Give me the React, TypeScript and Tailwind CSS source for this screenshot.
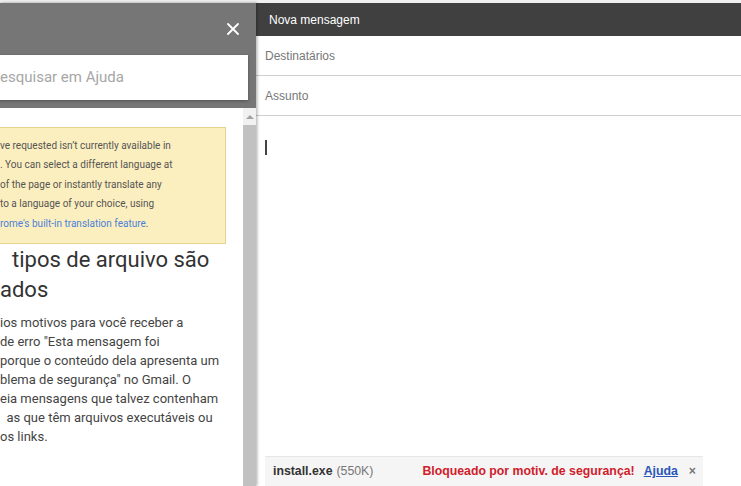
import { X } from 'lucide-react';

const NOTICE = [
  've requested isn’t currently available in',
  '. You can select a different language at',
  'of the page or instantly translate any',
  'to a language of your choice, using',
];

const BODY = [
  'ios motivos para você receber a',
  'de erro "Esta mensagem foi',
  'porque o conteúdo dela apresenta um',
  'blema de segurança" no Gmail. O',
  'eia mensagens que talvez contenham',
  '  as que têm arquivos executáveis ou',
  'os links.',
];

const HelpPanel = () => (
  <div className="relative z-10 flex w-[256px] shrink-0 flex-col bg-white font-['Roboto',sans-serif] shadow-[1px_0_3px_rgba(0,0,0,0.35)]">
    <div className="flex shrink-0 flex-col bg-[#767676] pb-[8px]">
      <div className="flex h-[52px] items-center justify-end pr-[13px]">
        <X className="h-[20px] w-[20px] text-white" strokeWidth={2.2} />
      </div>
      <div className="-ml-[10px] mr-[8px] flex h-[45px] items-center bg-white pl-[10px] shadow-[0_1px_3px_rgba(0,0,0,0.3)]">
        <span className="whitespace-nowrap text-[15px] text-[#a6a6a6]">esquisar em Ajuda</span>
      </div>
    </div>

    <div className="flex min-h-0 flex-1">
      <div className="flex min-w-0 flex-1 flex-col overflow-hidden">
        <div className="-ml-[10px] mr-[17px] mt-[19px] h-[117px] shrink-0 border border-[#e6d48e] bg-[#fcefbf] pl-[9px] pt-[8px] text-[10px] leading-[19.4px] text-[#555]">
          {NOTICE.map((line) => (
            <div key={line} className="whitespace-nowrap">{line}</div>
          ))}
          <div className="whitespace-nowrap text-[#4a7fd9]">rome's built-in translation feature<span className="text-[#555]">.</span></div>
        </div>

        <h1 className="mt-[1px] shrink-0 whitespace-nowrap text-[22px] leading-[30px] text-[#333]">
          <div className="pl-[12px]">tipos de arquivo são</div>
          <div>ados</div>
        </h1>

        <div className="mt-[8px] shrink-0 text-[13px] leading-[19px] text-[#444]">
          {BODY.map((line) => (
            <div key={line} className="whitespace-pre">{line}</div>
          ))}
        </div>

        <h2 className="mt-[36px] shrink-0 whitespace-nowrap pl-[36px] text-[22px] leading-[30px] text-[#333]">você não</h2>
      </div>

      <div className="flex w-[13px] shrink-0 flex-col bg-[#f1f1f1]">
        <div className="flex h-[17px] items-center justify-center">
          <div className="h-0 w-0 border-x-[4px] border-b-[4px] border-x-transparent border-b-[#a3a3a3]" />
        </div>
        <div className="flex-1 bg-[#c1c1c1]" />
      </div>
    </div>
  </div>
);

const Compose = () => (
  <div className="flex min-w-0 flex-1 flex-col bg-white font-['Liberation_Sans',Arial,sans-serif]">
    <div className="flex h-[33px] shrink-0 items-center bg-[#404040] pl-[13px] text-[12px] text-white">Nova mensagem</div>
    <div className="flex h-[40px] shrink-0 items-center border-b border-[#cfcfcf] pl-[9px] text-[12px] text-[#777]">Destinatários</div>
    <div className="flex h-[40px] shrink-0 items-center border-b border-[#cfcfcf] pl-[9px] text-[12px] text-[#777]">Assunto</div>

    <div className="flex flex-1 flex-col pl-[9px] pt-[24px]">
      <div className="h-[15px] w-[1.5px] bg-[#444]" />
      <div className="flex-1" />
      <div className="flex h-[30px] w-[438px] shrink-0 items-center whitespace-nowrap border-t border-[#e6e6e6] bg-[#f5f5f5] pl-[8px] text-[12.3px]">
        <span className="font-bold text-[#333]">install.exe</span>
        <span className="ml-[4px] text-[#777]">(550K)</span>
        <span className="ml-[49px] font-bold text-[#d0202a]">Bloqueado por motiv. de segurança!</span>
        <span className="ml-[9px] font-bold text-[#2a57b8] underline">Ajuda</span>
        <span className="ml-[11px] font-bold text-[#777]">×</span>
      </div>
    </div>
  </div>
);

export default function App() {
  return (
    <div className="flex h-[486px] w-[741px] flex-col overflow-hidden bg-[#f2f2f2]">
      <div className="h-[3px] shrink-0 bg-[#f0f0f0]" />
      <div className="flex min-h-0 flex-1">
        <HelpPanel />
        <Compose />
      </div>
    </div>
  );
}
